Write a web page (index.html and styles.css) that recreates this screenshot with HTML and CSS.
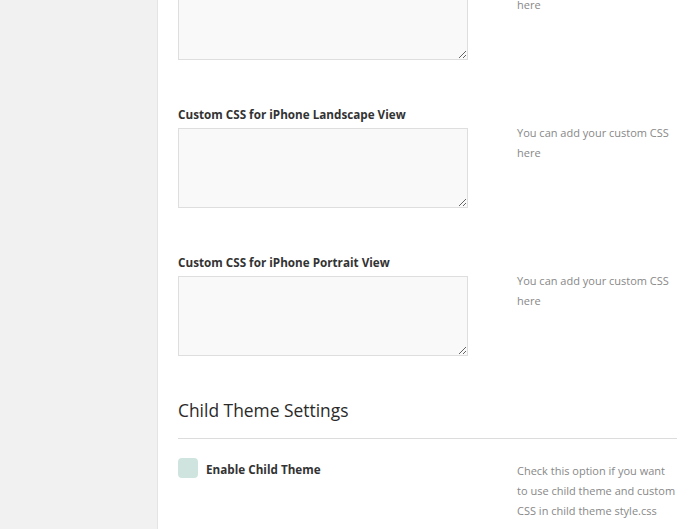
FILE: index.html
```html
<!DOCTYPE html>
<html>
<head>
<meta charset="utf-8">
<link rel="stylesheet" href="styles.css">
</head>
<body>
<div class="layout">
  <aside class="sidebar"></aside>
  <main class="content">
    <div class="options">
      <div class="row">
        <div class="field">
          <label class="label">Custom CSS for iPad Portrait View</label>
          <textarea class="box"></textarea>
        </div>
        <div class="desc">You can add your custom CSS here</div>
      </div>
      <div class="row">
        <div class="field">
          <label class="label">Custom CSS for iPhone Landscape View</label>
          <textarea class="box"></textarea>
        </div>
        <div class="desc">You can add your custom CSS here</div>
      </div>
      <div class="row">
        <div class="field">
          <label class="label">Custom CSS for iPhone Portrait View</label>
          <textarea class="box"></textarea>
        </div>
        <div class="desc">You can add your custom CSS here</div>
      </div>
    </div>
    <h2 class="section-title">Child Theme Settings</h2>
    <div class="row check-row">
      <div class="field check-field">
        <span class="checkbox"></span>
        <span class="check-label">Enable Child Theme</span>
      </div>
      <div class="desc check-desc">Check this option if you want to use child theme and custom CSS in child theme style.css</div>
    </div>
  </main>
</div>
</body>
</html>
```
FILE: styles.css
```css
html, body {
  margin: 0;
  padding: 0;
  background: #fff;
  font-family: "Open Sans", "Liberation Sans", sans-serif;
  overflow: hidden;
}
.layout {
  display: flex;
  min-height: 529px;
}
.sidebar {
  width: 157px;
  flex: none;
  background: #f1f1f1;
  border-right: 1px solid #e4e4e4;
}
.content {
  flex: 1;
  min-width: 0;
  padding: 0 16px 0 20px;
}
.options {
  margin-top: -45px;
  display: flex;
  flex-direction: column;
  gap: 43px;
}
.row {
  display: flex;
  gap: 49px;
}
.field {
  width: 290px;
  flex: none;
  display: flex;
  flex-direction: column;
}
.label {
  font-size: 11.7px;
  font-weight: 700;
  color: #333;
  line-height: 20px;
  padding-top: 1px;
  margin-bottom: 4px;
}
.box {
  box-sizing: border-box;
  width: 290px;
  height: 80px;
  margin: 0;
  border: 1px solid #dedede;
  background: #f9f9f9;
  display: block;
  resize: both;
  outline: none;
}
.desc {
  flex: 1;
  min-width: 0;
  padding-top: 20px;
  font-size: 11px;
  line-height: 20px;
  color: #888;
}
.section-title {
  margin: 42px 0 0;
  font-size: 17.4px;
  font-weight: 400;
  line-height: 24px;
  color: #2a2a2a;
  padding-bottom: 16px;
  border-bottom: 1px solid #dcdcdc;
}
.check-row {
  margin-top: 19px;
}
.check-field {
  flex-direction: row;
  align-items: flex-start;
  gap: 8px;
}
.checkbox {
  width: 20px;
  height: 20px;
  border-radius: 4px;
  background: #cfe4de;
  flex: none;
}
.check-label {
  font-size: 11.7px;
  font-weight: 700;
  color: #333;
  line-height: 18px;
  padding-top: 2px;
}
.check-desc {
  padding-top: 3px;
}
```
